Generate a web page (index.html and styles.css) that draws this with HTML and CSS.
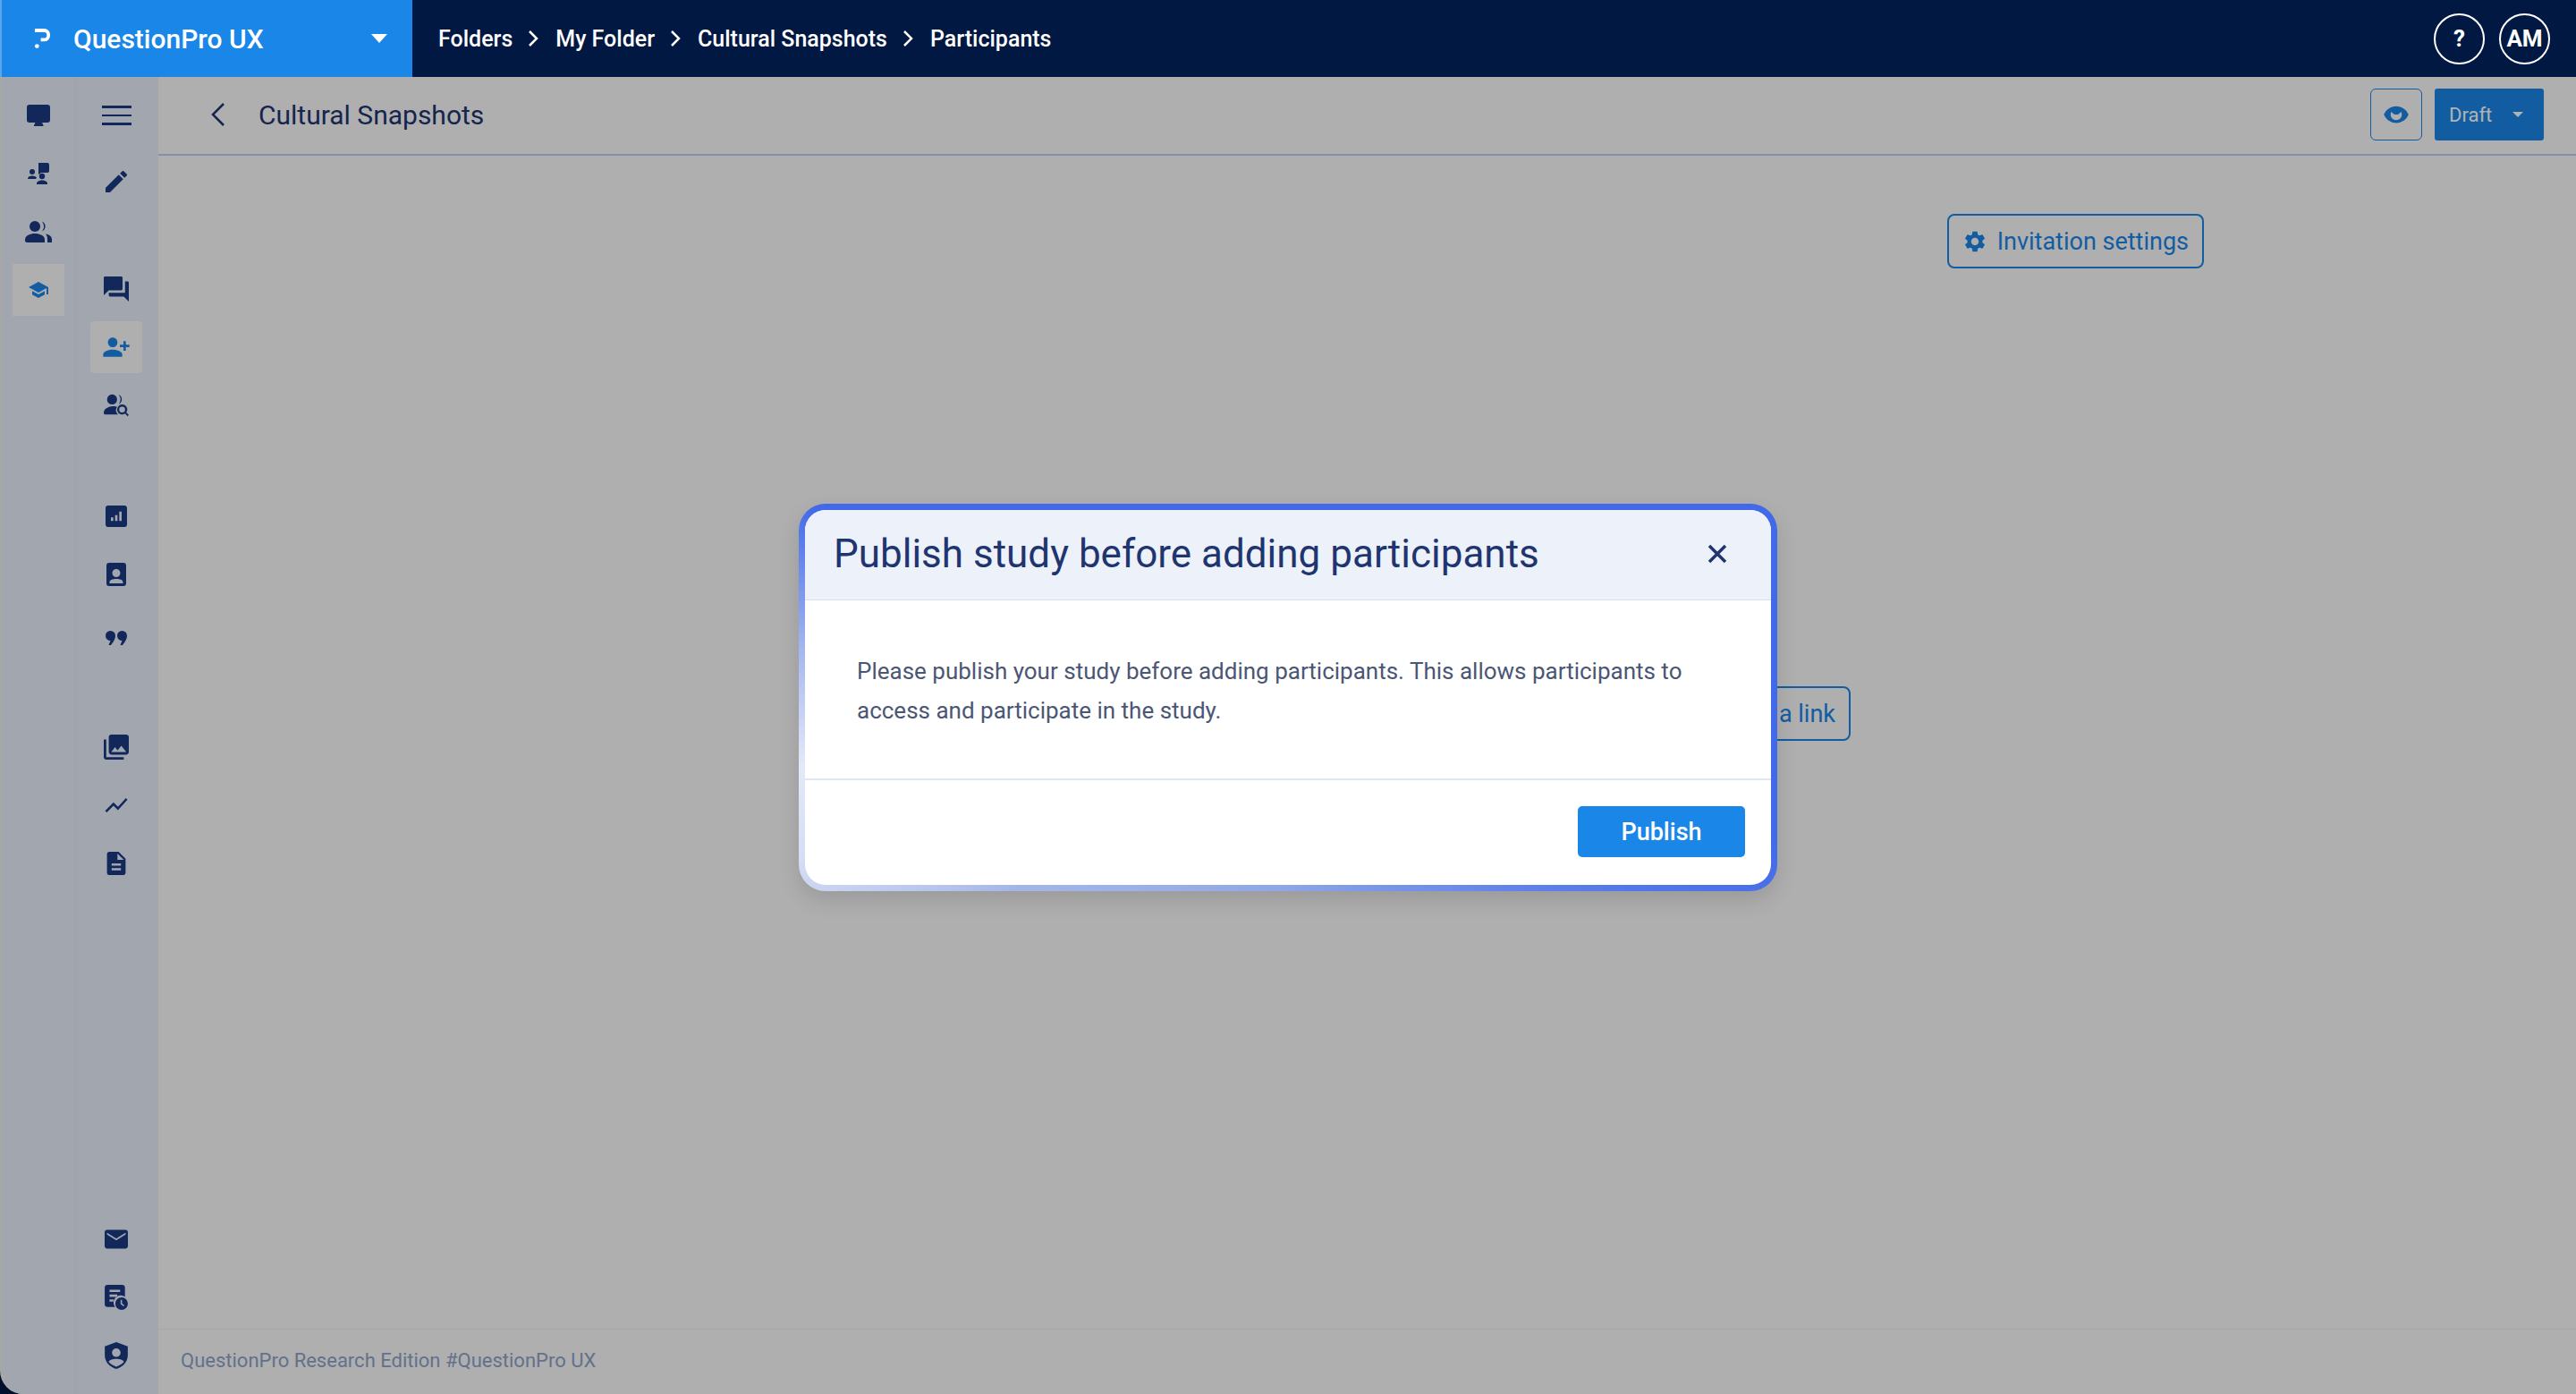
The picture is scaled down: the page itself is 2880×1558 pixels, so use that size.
FILE: index.html
```html
<!DOCTYPE html>
<html lang="en">
<head>
    <meta charset="UTF-8">
    <title>QuestionPro UX - Participants</title>
    <link rel="stylesheet" href="styles.css">
</head>
<body>
    <div class="app">
        <header class="topbar">
            <div class="brand">
                <svg class="brand-logo" viewBox="0 0 20 26"><path d="M1 1h11a7 7 0 0 1 7 7v1a7 7 0 0 1-7 7H8v-4h4a3 3 0 0 0 3-3V8a3 3 0 0 0-3-3H1z"/><rect x="1" y="19" width="5" height="5" rx="2.5"/></svg>
                <span class="brand-name">QuestionPro UX</span>
                <span class="brand-caret"></span>
            </div>
            <nav class="crumbs">
                <span>Folders</span>
                <svg viewBox="0 0 12 20"><path d="M2 2l8 8-8 8"/></svg>
                <span>My Folder</span>
                <svg viewBox="0 0 12 20"><path d="M2 2l8 8-8 8"/></svg>
                <span>Cultural Snapshots</span>
                <svg viewBox="0 0 12 20"><path d="M2 2l8 8-8 8"/></svg>
                <span>Participants</span>
            </nav>
            <div class="top-actions">
                <span class="circle">?</span>
                <span class="circle">AM</span>
            </div>
        </header>

        <div class="main">
            <aside class="sidebar">
                <div class="rail rail-first">
                    <a class="rail-item"><svg class="ico ico-26" viewBox="0 0 26 24"><path d="M3 0h20a3 3 0 0 1 3 3v14a3 3 0 0 1-3 3h-6l1.500 3v1H8v-1l1.500-3H3a3 3 0 0 1-3-3V3a3 3 0 0 1 3-3z"/></svg></a>
                    <a class="rail-item"><svg class="ico ico-24" viewBox="0 0 24 24"><path d="M12 0h10a2 2 0 0 1 2 2v7a2 2 0 0 1-2 2h-7l-3 2z"/><circle cx="5" cy="10" r="3"/><path d="M0 18c0-2.500 2.500-3.500 5-3.500s4 .7 5 2l-1 1.500z"/><circle cx="16" cy="15" r="3.200"/><path d="M10 24v-1c0-2 3-3.500 6-3.500s6 1.500 6 3.500v1z"/></svg></a>
                    <a class="rail-item"><svg class="ico ico-30" viewBox="0 0 30 24"><circle cx="11" cy="6" r="6"/><path d="M19 .5a6 6 0 0 1 0 11 9 9 0 0 0 0-11z"/><path d="M0 21c0-5 6-7 11-7s11 2 11 7v3H2a2 2 0 0 1-2-2z"/><path d="M23 14.500c4 .5 7 2.500 7 6V24h-5v-3.500c0-2.500-.5-4.500-2-6z"/></svg></a>
                    <a class="rail-item is-active"><svg class="ico ico-22" viewBox="1 3 22 18"><path d="M5 13.180v4L12 21l7-3.820v-4L12 17l-7-3.820zM12 3L1 9l11 6 9-4.910V17h2V9L12 3z"/></svg></a>
                </div>
                <div class="rail rail-second">
                    <div class="rail-group">
                        <a class="rail-item"><span class="burger"><i></i><i></i><i></i></span></a>
                        <a class="rail-item edit-item"><svg class="ico ico-32" viewBox="0 0 24 24"><path d="M3 17.250V21h3.750L17.810 9.940l-3.750-3.750L3 17.250zM20.710 7.040c.39-.39.39-1.020 0-1.410l-2.340-2.340c-.39-.39-1.020-.39-1.410 0l-1.830 1.830 3.750 3.750 1.830-1.830z"/></svg></a>
                    </div>
                    <div class="rail-group group-talk">
                        <a class="rail-item"><svg class="ico ico-28" viewBox="2 2 20 20"><path d="M21 6h-2v9H6v2c0 .55.45 1 1 1h11l4 4V7c0-.55-.45-1-1-1zm-4 6V3c0-.55-.45-1-1-1H3c-.55 0-1 .45-1 1v14l4-4h10c.55 0 1-.45 1-1z"/></svg></a>
                        <a class="rail-item is-active"><svg class="ico ico-32" viewBox="0 0 24 24"><g transform="matrix(-1 0 0 1 24 0)"><path d="M15 12c2.210 0 4-1.790 4-4s-1.790-4-4-4-4 1.790-4 4 1.790 4 4 4zm-9-2V7H4v3H1v2h3v3h2v-3h3v-2H6zm9 4c-2.670 0-8 1.340-8 4v2h16v-2c0-2.660-5.330-4-8-4z"/></g></svg></a>
                        <a class="rail-item"><svg class="ico ico-28" viewBox="0 0 30 26"><circle cx="10" cy="6" r="6"/><path d="M18 .5a6 6 0 0 1 0 11 9 9 0 0 0 0-11z"/><path d="M0 22c0-5 6-8 11-8 2 0 4 .5 5 1a7 7 0 0 0 1 9H1.500A1.500 1.500 0 0 1 0 22.500z"/><path fill-rule="evenodd" d="M22 12a6 6 0 1 0 3.500 10.900L28.500 26 30 24.500 27 21.500A6 6 0 0 0 22 12zm0 2.500a3.500 3.500 0 1 1 0 7 3.500 3.500 0 0 1 0-7z"/></svg></a>
                    </div>
                    <div class="rail-group group-report">
                        <a class="rail-item"><svg class="ico ico-24" viewBox="3 3 18 18"><path fill-rule="evenodd" d="M19 3H5c-1.100 0-2 .9-2 2v14c0 1.100.9 2 2 2h14c1.100 0 2-.9 2-2V5c0-1.100-.9-2-2-2zM9.500 16h-2v-3h2v3zm3.500 0h-2v-5h2v5zm3.500 0h-2V8h2v8z"/></svg></a>
                        <a class="rail-item"><svg class="ico ico-26" viewBox="0 0 22 26"><path fill-rule="evenodd" d="M3 0h16a3 3 0 0 1 3 3v20a3 3 0 0 1-3 3H3a3 3 0 0 1-3-3V3a3 3 0 0 1 3-3zm8 7a4.500 4.500 0 1 0 0 9 4.500 4.500 0 0 0 0-9zM3.500 23h15v-1.500c0-2.500-4-3.500-7.500-3.500s-7.500 1-7.500 3.500z"/></svg></a>
                        <a class="rail-item quote-item"><svg class="ico ico-24" viewBox="0 0 24 16"><path d="M5.500 0a5.500 5.500 0 0 1 5.500 5.500c0 4-3 8-5 10.500H3.500l2-5a5.500 5.500 0 0 1 0-11z"/><path d="M18.500 0a5.500 5.500 0 0 1 5.500 5.500c0 4-3 8-5 10.500h-2.500l2-5a5.500 5.500 0 0 1 0-11z"/></svg></a>
                    </div>
                    <div class="rail-group group-media">
                        <a class="rail-item"><svg class="ico ico-28" viewBox="2 2 20 20"><path d="M22 16V4c0-1.100-.9-2-2-2H8c-1.100 0-2 .9-2 2v12c0 1.100.9 2 2 2h12c1.100 0 2-.9 2-2zm-11-4l2.030 2.710L16 11l4 5H8l3-4zM2 6v14c0 1.100.9 2 2 2h14v-2H4V6H2z"/></svg></a>
                        <a class="rail-item"><svg class="ico ico-30" viewBox="0 0 24 24"><path d="M3.500 18.490l6-6.010 4 4L22 6.920l-1.410-1.410-7.090 7.970-4-4L2 16.990z"/></svg></a>
                        <a class="rail-item"><svg class="ico ico-26" viewBox="4 2 16 20"><path d="M14 2H6c-1.100 0-1.990.9-1.990 2L4 20c0 1.100.89 2 1.990 2H18c1.100 0 2-.9 2-2V8l-6-6zm2 16H8v-2h8v2zm0-4H8v-2h8v2zm-3-5V3.500L18.500 9H13z"/></svg></a>
                    </div>
                    <div class="rail-group group-bottom">
                        <a class="rail-item"><svg class="ico ico-26" viewBox="2 4 20 16"><path fill-rule="evenodd" d="M4 4h16c1.100 0 2 .9 2 2v12c0 1.100-.9 2-2 2H4c-1.100 0-2-.9-2-2V6c0-1.100.9-2 2-2zm16 4V6.500l-8 5-8-5V8l8 5z"/></svg></a>
                        <a class="rail-item"><svg class="ico ico-28" viewBox="0 0 24 26"><path fill-rule="evenodd" d="M3 0h15a3 3 0 0 1 3 3v9.300A7.500 7.500 0 0 0 10.700 23H3a3 3 0 0 1-3-3V3a3 3 0 0 1 3-3zm2 5v2.500h11V5zm0 5v2.500h8V10zm0 5v2.500h4V15z"/><path fill-rule="evenodd" d="M17.500 13a6.500 6.500 0 1 0 0 13 6.500 6.500 0 0 0 0-13zm-1 2.500h1.500v3.800l2.500 2-1 1.100-3-2.400z"/></svg></a>
                        <a class="rail-item"><svg class="ico ico-30" viewBox="0 0 24 28"><path fill-rule="evenodd" d="M12 0l12 4.500V14c0 6.500-5 12-12 14C5 26 0 20.500 0 14V4.500zm0 6.500a4.500 4.500 0 1 0 0 9 4.500 4.500 0 0 0 0-9zm-8 14c2 2.500 5 4 8 5.200 3-1.200 6-2.700 8-5.200-1-2-4.500-3-8-3s-7 1-8 3z"/></svg></a>
                    </div>
                </div>
            </aside>

            <section class="content">
                <div class="page-head">
                    <svg class="back" viewBox="0 0 18 28"><path d="M15 2L3 14l12 12"/></svg>
                    <h2 class="page-title">Cultural Snapshots</h2>
                    <a class="eye-btn"><svg viewBox="0 0 24 24"><path d="M12 4.500C7 4.500 2.730 7.610 1 12c1.730 4.390 6 7.500 11 7.500s9.270-3.110 11-7.500c-1.730-4.390-6-7.500-11-7.500zM12 17c-2.760 0-5-2.240-5-5 0-1 .3-1.900.8-2.700.9 1.700 2.400 2.700 4.200 2.700s3.300-1 4.200-2.700c.5.800.8 1.700.8 2.700 0 2.760-2.240 5-5 5z"/></svg></a>
                    <a class="draft-btn">Draft<span class="draft-caret"></span></a>
                </div>
                <div class="page-body">
                    <div class="invite-row">
                        <a class="outline-btn">
                            <svg viewBox="0 0 24 24"><path d="M19.140,12.940c0.040-0.300,0.060-0.610,0.060-0.940c0-0.320-0.020-0.640-0.070-0.940l2.030-1.580c0.180-0.140,0.230-0.410,0.120-0.610 l-1.920-3.320c-0.120-0.220-0.370-0.290-0.590-0.220l-2.390,0.960c-0.500-0.380-1.030-0.700-1.620-0.940L14.400,2.810c-0.040-0.240-0.240-0.410-0.480-0.410 h-3.840c-0.240,0-0.430,0.170-0.470,0.410L9.250,5.350C8.660,5.590,8.120,5.920,7.630,6.290L5.240,5.330c-0.220-0.080-0.470,0-0.590,0.220L2.740,8.870 C2.620,9.080,2.660,9.340,2.860,9.480l2.030,1.580C4.840,11.360,4.800,11.690,4.800,12s0.020,0.640,0.070,0.940l-2.030,1.580 c-0.180,0.140-0.230,0.410-0.120,0.610l1.920,3.320c0.120,0.220,0.370,0.290,0.590,0.220l2.390-0.960c0.500,0.380,1.030,0.700,1.620,0.940l0.360,2.540 c0.050,0.240,0.240,0.410,0.480,0.410h3.840c0.240,0,0.440-0.170,0.470-0.410l0.360-2.540c0.590-0.240,1.130-0.560,1.620-0.940l2.390,0.960 c0.220,0.080,0.470,0,0.590-0.220l1.920-3.320c0.120-0.220,0.070-0.470-0.120-0.610L19.140,12.940z M12,15.600c-1.980,0-3.600-1.620-3.600-3.600 s1.620-3.600,3.600-3.600s3.600,1.620,3.600,3.600S13.980,15.600,12,15.600z"/></svg>
                            Invitation settings
                        </a>
                    </div>
                    <div class="share-row">
                        <a class="outline-btn">Share via a link</a>
                    </div>
                </div>
                <footer class="page-foot">QuestionPro Research Edition #QuestionPro UX</footer>
            </section>
        </div>
    </div>

    <div class="backdrop">
        <div class="modal">
            <div class="modal-head">
                <h1>Publish study before adding participants</h1>
                <svg class="modal-close" viewBox="0 0 22 22"><path d="M2 2l18 18M20 2L2 20"/></svg>
            </div>
            <div class="modal-body">
                <p>Please publish your study before adding participants. This allows participants to access and participate in the study.</p>
            </div>
            <div class="modal-foot">
                <button class="publish">Publish</button>
            </div>
        </div>
    </div>
</body>
</html>
```

FILE: styles.css
```css
* {
    box-sizing: border-box;
}

body {
    margin: 0;
    height: 1558px;
    overflow: hidden;
    position: relative;
    background-color: #011842;
    font-family: Roboto, "Noto Sans", sans-serif;
    color: #1f3570;
}

.app {
    display: flex;
    flex-direction: column;
    height: 100%;
}

/* top bar */
.topbar {
    display: flex;
    align-items: center;
    flex: 0 0 86px;
    background-color: #011842;
    color: white;
}

.brand {
    display: flex;
    align-items: center;
    width: 461px;
    height: 100%;
    padding-left: 36px;
    background-color: #1a86e8;
    border-left: 2px solid #5aa6ea;
}

.brand-logo {
    width: 19px;
    height: 25px;
    fill: white;
}

.brand-name {
    margin-left: 25px;
    font-size: 30px;
    font-weight: 500;
}

.brand-caret {
    margin-left: auto;
    margin-right: 28px;
    border-left: 9px solid transparent;
    border-right: 9px solid transparent;
    border-top: 10px solid white;
}

.crumbs {
    display: flex;
    align-items: center;
    margin-left: 29px;
    font-size: 25px;
    font-weight: 500;
}

.crumbs svg {
    width: 12px;
    height: 20px;
    margin: 0 19px 0 17px;
    fill: none;
    stroke: white;
    stroke-width: 2.5;
}

.top-actions {
    display: flex;
    gap: 16px;
    margin-left: auto;
    margin-right: 29px;
}

.circle {
    display: flex;
    align-items: center;
    justify-content: center;
    width: 57px;
    height: 57px;
    border: 2px solid white;
    border-radius: 50%;
    font-size: 26px;
    font-weight: 700;
}

/* layout under the top bar */
.main {
    display: flex;
    flex: 1;
    min-height: 0;
    border-left: 2px solid #f0f0f0;
    border-bottom-left-radius: 26px;
    overflow: hidden;
    background-color: #fbfbfb;
}

.sidebar {
    display: flex;
    flex: 0 0 175px;
    background-color: #e9effb;
}

.rail {
    display: flex;
    flex-direction: column;
    padding: 14px 0;
}

.rail-first {
    flex: 0 0 80px;
    align-items: center;
    gap: 7px;
    padding-left: 2px;
}

.rail-second {
    flex: 0 0 95px;
    align-items: center;
    padding-right: 5px;
    border-left: 6px solid #e6ecf8;
}

.rail-group {
    display: flex;
    flex-direction: column;
    gap: 7px;
}

.group-talk {
    margin-top: 62px;
}

.group-report {
    margin-top: 66px;
}

.group-media {
    margin-top: 64px;
}

.group-bottom {
    margin-top: auto;
}

.edit-item {
    margin-top: 9px;
}

.quote-item {
    margin-top: 6px;
}

.rail-item {
    display: flex;
    align-items: center;
    justify-content: center;
    width: 58px;
    height: 58px;
    color: #1a3a82;
}

.rail-item.is-active {
    background-color: #fbfbfb;
    border-radius: 4px;
    color: #1a86e8;
}

.rail-first .is-active {
    border-radius: 0;
}

.ico {
    fill: currentColor;
}

.ico-22 {
    width: 22px;
    height: 22px;
}

.ico-24 {
    width: 24px;
    height: 24px;
}

.ico-26 {
    width: 26px;
    height: 26px;
}

.ico-28 {
    width: 28px;
    height: 28px;
}

.ico-30 {
    width: 30px;
    height: 30px;
}

.ico-32 {
    width: 32px;
    height: 32px;
}

.burger {
    display: flex;
    flex-direction: column;
    gap: 7px;
    width: 33px;
}

.burger i {
    display: block;
    height: 2.500px;
    background-color: #1a3a82;
}

/* page */
.content {
    display: flex;
    flex-direction: column;
    flex: 1;
    min-width: 0;
}

.page-head {
    display: flex;
    align-items: center;
    flex: 0 0 88px;
    padding: 0 36px 2px 58px;
    border-bottom: 2px solid #bcd0f0;
}

.back {
    width: 18px;
    height: 28px;
    fill: none;
    stroke: #1f3570;
    stroke-width: 2.500;
}

.page-title {
    margin: 0 auto 0 36px;
    font-size: 30px;
    font-weight: 400;
}

.eye-btn {
    display: flex;
    align-items: center;
    justify-content: center;
    width: 58px;
    height: 58px;
    margin-right: 14px;
    border: 1.500px solid #1a86e8;
    border-radius: 6px;
}

.eye-btn svg {
    width: 30px;
    height: 30px;
    fill: #1a86e8;
}

.draft-btn {
    display: flex;
    align-items: center;
    width: 122px;
    height: 58px;
    padding-left: 16px;
    border-radius: 3px;
    background-color: #1a86e8;
    color: white;
    font-size: 22px;
}

.draft-caret {
    margin-left: 23px;
    border-left: 6px solid transparent;
    border-right: 6px solid transparent;
    border-top: 6px solid white;
}

.page-body {
    flex: 1;
    padding-top: 65px;
}

.invite-row {
    display: flex;
    justify-content: flex-end;
    padding-right: 416px;
}

.share-row {
    display: flex;
    justify-content: flex-end;
    margin-top: 467px;
    padding-right: 811px;
}

.outline-btn {
    display: flex;
    align-items: center;
    gap: 11px;
    height: 61px;
    padding: 0 15px;
    border: 2px solid #1a86e8;
    border-radius: 8px;
    color: #1a86e8;
    font-size: 27px;
    white-space: nowrap;
}

.outline-btn svg {
    width: 28px;
    height: 28px;
    fill: #1a86e8;
}

.page-foot {
    flex: 0 0 73px;
    padding: 22px 25px 0;
    border-top: 1px solid #f0f0f0;
    color: #8fa3c8;
    font-size: 22px;
}

/* dimmed layer and dialog */
.backdrop {
    position: absolute;
    top: 86px;
    left: 0;
    right: 0;
    bottom: 0;
    background-color: rgba(0, 0, 0, 0.3);
}

.modal {
    position: absolute;
    top: 477px;
    left: 893px;
    width: 1094px;
    height: 433px;
    display: flex;
    flex-direction: column;
    border: 7px solid transparent;
    border-radius: 30px;
    background:
        linear-gradient(white, white) padding-box,
        conic-gradient(from 0deg, #4169e8 0deg, #4169e8 105deg, #6f8de8 140deg, #8ea6e6 180deg, #a3b5e8 235deg, #d5def5 252deg, #e3e9f8 262deg, #a3b5ee 276deg, #4169e8 292deg, #4169e8 360deg) border-box;
    box-shadow: 0 10px 24px rgba(0, 0, 0, 0.12);
}

.modal-head {
    display: flex;
    align-items: center;
    justify-content: space-between;
    flex: 0 0 101px;
    padding: 0 49px 2px 32px;
    border-bottom: 1.500px solid #d5e0f5;
    border-radius: 23px 23px 0 0;
    background-color: #edf1fa;
}

.modal-head h1 {
    margin: 0;
    font-size: 44px;
    font-weight: 400;
    color: #1f3570;
}

.modal-close {
    width: 22px;
    height: 22px;
    fill: none;
    stroke: #1f3570;
    stroke-width: 3.500;
}

.modal-body {
    flex: 0 0 201px;
    padding: 57px 58px 0;
    border-bottom: 2px solid #dfe6f5;
}

.modal-body p {
    margin: 0;
    font-size: 26px;
    line-height: 44px;
    color: #4b5675;
}

.modal-foot {
    display: flex;
    flex: 1;
    justify-content: flex-end;
    padding: 29px 29px 0 0;
}

.publish {
    width: 187px;
    height: 57px;
    border: none;
    border-radius: 5px;
    background-color: #1a86e8;
    color: white;
    font-family: inherit;
    font-size: 27px;
    font-weight: 500;
}
```
